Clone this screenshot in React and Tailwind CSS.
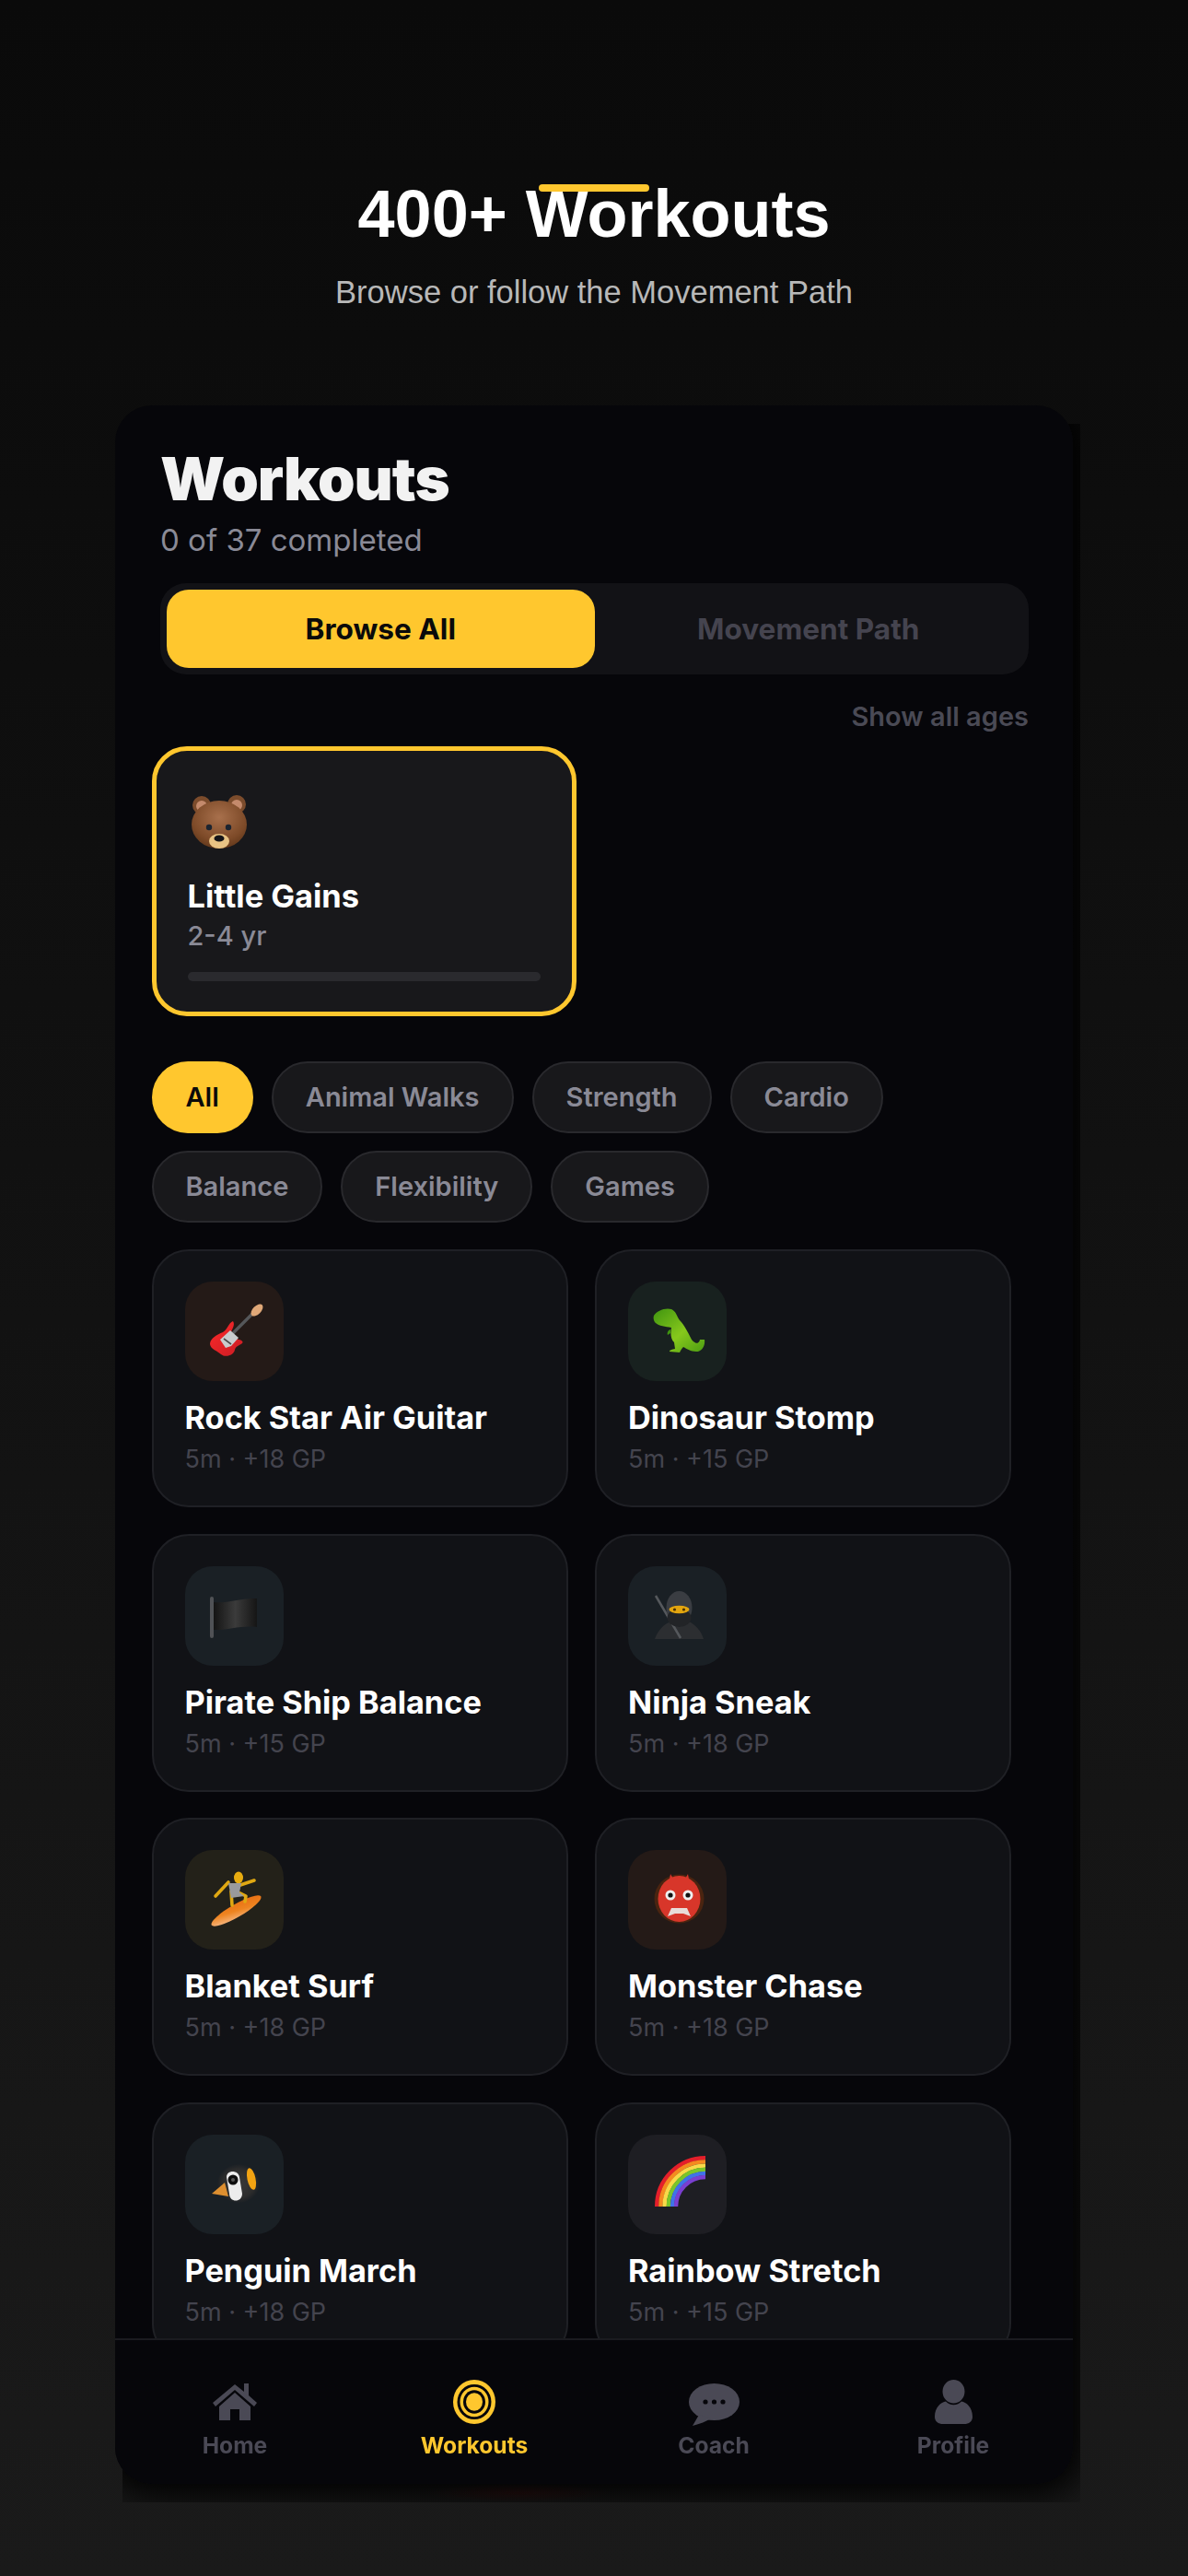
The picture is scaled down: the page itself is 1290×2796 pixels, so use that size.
import React from "react";

const Tile = ({ bg, children }) => (
  <div className={`w-[107px] h-[108px] rounded-[30px] ${bg}`}>
    <svg viewBox="0 0 107 108" width="107" height="108">{children}</svg>
  </div>
);

const Guitar = () => (
  <>
    <defs>
      <linearGradient id="gb" x1="0" y1="0" x2="1" y2="1"><stop offset="0" stopColor="#ff2a2a" /><stop offset="1" stopColor="#c81c24" /></linearGradient>
    </defs>
    <line x1="48" y1="60" x2="74" y2="34" stroke="#55575a" strokeWidth="3.4" />
    <ellipse cx="78" cy="31" rx="8" ry="4.5" transform="rotate(-45 78 31)" fill="#e0a878" />
    <path d="M52 43C47 45 46 52 41 55C34 58 27 62 27 68C28 74 35 75 39 79C44 83 53 80 54 74C55 70 58 70 62 67C64 65 60 63 58 63C54 60 50 60 50 56C50 52 55 48 52 43Z" fill="url(#gb)" />
    <path d="M38 63L49 53L58 61L50 70L44 72Z" fill="#c9ccce" />
    <line x1="42" y1="62" x2="50" y2="68" stroke="#4a4a4a" strokeWidth="1.6" />
  </>
);

const Dino = () => (
  <>
    <defs>
      <linearGradient id="dg" x1="0" y1="0" x2="1" y2="1"><stop offset="0" stopColor="#3f9410" /><stop offset=".55" stopColor="#86c81c" /><stop offset="1" stopColor="#4c9c12" /></linearGradient>
    </defs>
    <path d="M28 37C31 32 40 28 47 30C52 32 53 38 56 42C61 47 65 55 69 63C73 68 77 68 78 63L83 63C84 70 80 76 74 76C68 76 64 73 60 71C58 73 57 75 56 77L45 76C45 74 48 74 51 73L50 66C46 62 46 56 47 50C41 49 33 48 30 45C28 43 27 40 28 37Z" fill="url(#dg)" />
    <path d="M46 52C43 53 42 56 43 58L46 56Z" fill="#3f9410" />
  </>
);

const Flag = () => (
  <>
    <defs>
      <linearGradient id="fg" x1="0" y1="0" x2="1" y2="0"><stop offset="0" stopColor="#141414" /><stop offset=".5" stopColor="#3b3b3b" /><stop offset="1" stopColor="#151515" /></linearGradient>
    </defs>
    <rect x="27" y="33" width="4" height="45" rx="2" fill="#505256" />
    <path d="M31 39C45 41 60 34 78 35L78 66C60 64 45 70 31 69Z" fill="url(#fg)" />
  </>
);

const Ninja = () => (
  <>
    <path d="M29 79C33 68 40 62 47 60L66 60C74 64 79 70 82 79Z" fill="#2c2e31" />
    <line x1="30" y1="32" x2="57" y2="78" stroke="#55585c" strokeWidth="2.5" />
    <ellipse cx="55.5" cy="45" rx="14" ry="18" fill="#3a3d42" />
    <ellipse cx="55.5" cy="56" rx="13" ry="10" fill="#222427" />
    <ellipse cx="55.5" cy="47" rx="11" ry="4.2" fill="#e3a50f" />
    <circle cx="50.5" cy="47" r="1.6" fill="#4a3204" />
    <circle cx="60.5" cy="47" r="1.6" fill="#4a3204" />
  </>
);

const Surfer = () => (
  <>
    <defs>
      <linearGradient id="sb" x1="0" y1="1" x2="1" y2="0"><stop offset="0" stopColor="#f9c49a" /><stop offset=".5" stopColor="#ee8420" /><stop offset="1" stopColor="#e86a10" /></linearGradient>
    </defs>
    <ellipse cx="55.5" cy="66" rx="31" ry="7" transform="rotate(-30 55.5 66)" fill="url(#sb)" />
    <path d="M33 50L47 35M75 33L60 38M50 45L51 60M60 47L66 50L65 56" stroke="#e0a812" strokeWidth="3.6" strokeLinecap="round" strokeLinejoin="round" fill="none" />
    <ellipse cx="58" cy="30" rx="5" ry="6.5" fill="#e8ac10" />
    <path d="M47 36L61 36L59 46L64 50L50 52Z" fill="#9a9a9c" />
  </>
);

const Ogre = () => (
  <>
    <ellipse cx="55.5" cy="53" rx="27" ry="26.5" fill="#4a2410" />
    <path d="M44 38L46 26L51 35ZM67 38L65 26L60 35Z" fill="#d8352a" />
    <ellipse cx="55.5" cy="53" rx="23" ry="25" fill="#d8362a" />
    <circle cx="46" cy="49" r="5.5" fill="#efefef" />
    <circle cx="65" cy="49" r="5.5" fill="#efefef" />
    <circle cx="46" cy="49" r="2.6" fill="#111" />
    <circle cx="65" cy="49" r="2.6" fill="#111" />
    <path d="M43 72L47 63L64 63L68 72L60 69L51 69Z" fill="#e8dcd8" />
  </>
);

const Penguin = () => (
  <>
    <defs>
      <radialGradient id="pg"><stop offset="0" stopColor="#3a3a3a" /><stop offset=".75" stopColor="#2c2c2c" /><stop offset="1" stopColor="#1b2025" /></radialGradient>
    </defs>
    <ellipse cx="58" cy="53" rx="23" ry="21" fill="url(#pg)" />
    <path d="M45 46C45 38 58 38 59 46L62 64C62 74 48 74 48 64Z" fill="#ececec" />
    <circle cx="52" cy="49" r="5.5" fill="#0d0d0d" />
    <circle cx="52" cy="49" r="2" fill="#555" />
    <path d="M29 64L43 52L47 67Z" fill="#dd8f30" />
    <ellipse cx="72" cy="48" rx="4.5" ry="12" transform="rotate(-12 72 48)" fill="#f2a312" />
  </>
);

const Rainbow = () => (
  <g fill="none" strokeWidth="4.4">
    {[
      ["#e41f2a", 52.8],
      ["#f58a1f", 48.6],
      ["#f9d949", 44.4],
      ["#7ac52a", 40.2],
      ["#3f73e8", 36],
      ["#7a3fd0", 32],
    ].map(([c, r]) => (
      <path key={c} d={`M${84 - r} 78A${r} ${r} 0 0 1 84 ${78 - r}`} stroke={c} />
    ))}
  </g>
);

const Bear = () => (
  <svg viewBox="12 12 62 60" width="62" height="60" className="block">
    <defs>
      <radialGradient id="bf" cx=".5" cy=".35" r=".7"><stop offset="0" stopColor="#a8704c" /><stop offset=".7" stopColor="#7d4a28" /><stop offset="1" stopColor="#5c3418" /></radialGradient>
    </defs>
    <circle cx="24" cy="24" r="10" fill="#7c4c2c" />
    <circle cx="62" cy="23" r="10" fill="#7c4c2c" />
    <circle cx="24" cy="25" r="6" fill="#c48a6c" />
    <circle cx="62" cy="24" r="6" fill="#c48a6c" />
    <ellipse cx="43" cy="45" rx="30" ry="26" fill="url(#bf)" />
    <circle cx="32" cy="48" r="3.2" fill="#1c2430" />
    <circle cx="53" cy="48" r="3.2" fill="#1c2430" />
    <ellipse cx="43" cy="63" rx="11" ry="8" fill="#e8c384" />
    <ellipse cx="43" cy="60" rx="5.5" ry="3.6" fill="#141418" />
  </svg>
);

const HomeIcon = () => (
  <svg viewBox="0 0 50 48" width="50" height="48">
    <path d="M25 5L1 25L4 29L25 11L46 29L49 25L40 17V4H35V13Z" fill="#4a4955" />
    <path d="M8 29L25 14L42 29V44H30V32H20V44H8Z" fill="#4a4955" />
  </svg>
);
const TargetIcon = () => (
  <svg viewBox="0 0 46 49" width="46" height="48" preserveAspectRatio="none">
    <ellipse cx="23" cy="24.5" rx="23" ry="24.5" fill="#ffc72e" />
    <ellipse cx="23" cy="24.5" rx="18.5" ry="19.5" fill="#06060a" />
    <ellipse cx="23" cy="24.5" rx="15.5" ry="16.5" fill="#ffc72e" />
    <ellipse cx="23" cy="24.5" rx="12" ry="13" fill="#06060a" />
    <ellipse cx="23" cy="24.5" rx="9" ry="10" fill="#ffc72e" />
  </svg>
);
const CoachIcon = () => (
  <svg viewBox="0 0 55 50" width="55" height="50" className="-mb-[2px]">
    <ellipse cx="27.5" cy="24" rx="27.5" ry="20" fill="#4a4955" />
    <path d="M11 38L4 50C12 48 19 45 24 42Z" fill="#4a4955" />
    <circle cx="18" cy="24" r="2.6" fill="#06060a" />
    <circle cx="27.5" cy="24" r="2.6" fill="#06060a" />
    <circle cx="37" cy="24" r="2.6" fill="#06060a" />
  </svg>
);
const ProfileIcon = () => (
  <svg viewBox="0 0 41 49" width="41" height="48" preserveAspectRatio="none">
    <ellipse cx="20.5" cy="13" rx="12" ry="13" fill="#4a4955" />
    <path d="M0 41C0 30 7 25 12 24C16 29 25 29 29 24C34 25 41 30 41 41C41 46 37 49 32 49H9C4 49 0 46 0 41Z" fill="#4a4955" />
  </svg>
);

const chipsA = ["Animal Walks", "Strength", "Cardio"];
const chipsB = ["Balance", "Flexibility", "Games"];

const cards = [
  ["Rock Star Air Guitar", "5m · +18 GP", "bg-[#241a17]", Guitar],
  ["Dinosaur Stomp", "5m · +15 GP", "bg-[#18211f]", Dino],
  ["Pirate Ship Balance", "5m · +15 GP", "bg-[#1a2025]", Flag],
  ["Ninja Sneak", "5m · +18 GP", "bg-[#1a2025]", Ninja],
  ["Blanket Surf", "5m · +18 GP", "bg-[#232119]", Surfer],
  ["Monster Chase", "5m · +18 GP", "bg-[#241a17]", Ogre],
  ["Penguin March", "5m · +18 GP", "bg-[#1a2025]", Penguin],
  ["Rainbow Stretch", "5m · +15 GP", "bg-[#1e1e23]", Rainbow],
];

const Chip = ({ label }) => (
  <div className="h-[78px] px-[35px] rounded-full border-2 border-[#29292d] bg-[#18181b] flex items-center text-[29px] font-semibold text-[#8a8a96]">
    {label}
  </div>
);

const NavItem = ({ icon, label, active }) => (
  <div className="flex flex-col items-center">
    <div className="h-[48px] flex items-center justify-center">{icon}</div>
    <div className={`mt-[7px] h-[32px] leading-[32px] text-[24.6px] font-bold ${active ? "text-[#ffc72e]" : "text-[#4a4955]"}`}>{label}</div>
  </div>
);

export default function App() {
  return (
    <div className="min-h-[2796px] bg-gradient-to-b from-[#0a0a0a] to-[#1a1a1a] flex flex-col items-center font-['Inter',sans-serif]">
      <header className="relative w-full mt-[190px] text-center font-['Liberation_Sans',sans-serif]">
        <h1 className="text-[72px] leading-[84px] font-bold text-white">400+ Workouts</h1>
        <div className="absolute top-[10px] left-[585px] w-[120px] h-[8px] rounded-full bg-[#ffc72e]" />
        <p className="mt-[22px] text-[34.5px] leading-[42px] text-[#b8b8b8]">Browse or follow the Movement Path</p>
      </header>

      <div className="relative mt-[102px] w-[1040px] h-[2256px]">
        <div className="absolute left-[8px] top-[20px] w-[1040px] h-[2256px] overflow-hidden">
          <div className="absolute -left-[8px] -top-[20px] w-[1040px] h-[2256px] rounded-[40px] shadow-[0_0_40px_14px_rgba(0,0,0,1)]" />
          <div className="absolute bottom-0 left-[330px] w-[200px] h-[20px] bg-[radial-gradient(closest-side,rgba(70,0,0,0.18),transparent)]" />
        </div>

        <div className="relative h-full rounded-[40px] bg-[#06060a] overflow-hidden flex flex-col blur-[0.6px]">
          <div className="flex-1 min-h-0 overflow-hidden pl-[39.5px] pr-[40px] pt-[40px]">
            <div className="pl-[9.5px]">
              <h2 className="text-[65px] leading-[80px] font-black text-[#f2f2f2] tracking-[-1px]">Workouts</h2>
              <p className="mt-[6px] text-[33px] leading-[40px] text-[#8a8a96]">0 of 37 completed</p>
              <div className="mt-[27px] h-[99px] rounded-[28px] bg-[#121216] p-[7px] grid grid-cols-2 w-[943px]">
                <div className="rounded-[24px] bg-[#ffc72e] text-[#0a0a0a] flex items-center justify-center text-[31.6px] font-bold">Browse All</div>
                <div className="flex items-center justify-center text-[31.6px] font-bold text-[#45444f]">Movement Path</div>
              </div>
              <div className="mt-[28px] w-[943px] text-right text-[29px] leading-[36px] font-semibold text-[#4a4a55]">Show all ages</div>
            </div>

            <div className="mt-[14px] w-[461px] h-[293px] rounded-[38px] border-[5px] border-[#ffc72e] bg-[#18181b] px-[34px] pt-[47px]">
              <div className="pl-[3px]"><Bear /></div>
              <div className="mt-[29px] text-[34.4px] leading-[44px] font-bold text-white">Little Gains</div>
              <div className="mt-[3px] text-[29px] leading-[36px] font-medium text-[#8a8a96]">2-4 yr</div>
              <div className="mt-[21px] h-[10px] rounded-full bg-[#2a2a2e]" />
            </div>

            <div className="mt-[49px] flex flex-col gap-[19px]">
              <div className="flex gap-[20px]">
                <div className="h-[78px] px-[37px] rounded-full bg-[#ffc72e] flex items-center text-[29px] font-semibold text-[#0a0a0a]">All</div>
                {chipsA.map((c) => <Chip key={c} label={c} />)}
              </div>
              <div className="flex gap-[20px]">
                {chipsB.map((c) => <Chip key={c} label={c} />)}
              </div>
            </div>

            <div className="mt-[29px] grid grid-cols-[452.5px_452px] gap-x-[29px] gap-y-[28.5px]">
              {cards.map(([title, meta, bg, Emoji]) => (
                <div key={title} className="h-[280px] rounded-[40px] border-2 border-[#1f2025] bg-[#111216] pl-[34px] pt-[33px]">
                  <Tile bg={bg}><Emoji /></Tile>
                  <div className="mt-[18px] text-[34.3px] leading-[44px] font-bold text-white">{title}</div>
                  <div className="mt-[5px] text-[27px] leading-[36px] text-[#44444e]">{meta}</div>
                </div>
              ))}
            </div>
          </div>

          <nav className="h-[158px] shrink-0 border-t-2 border-[#1b1b20] bg-[#06060a] pt-[43px] grid grid-cols-4">
            <NavItem icon={<HomeIcon />} label="Home" />
            <NavItem icon={<TargetIcon />} label="Workouts" active />
            <NavItem icon={<CoachIcon />} label="Coach" />
            <NavItem icon={<ProfileIcon />} label="Profile" />
          </nav>
        </div>
      </div>
    </div>
  );
}
